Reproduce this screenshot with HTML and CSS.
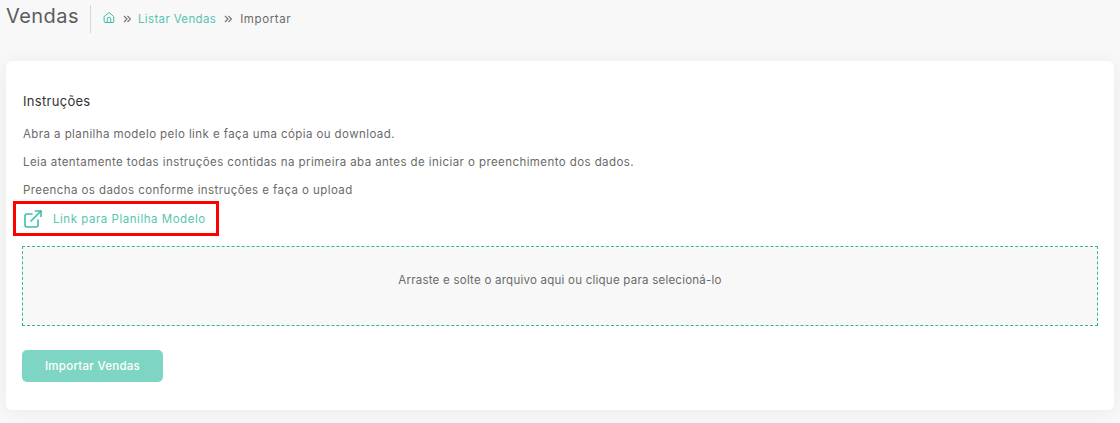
FILE: index.html
```html
<!DOCTYPE html>
<html lang="pt">
<head>
<meta charset="utf-8">
<title>Importar Vendas</title>
<link rel="stylesheet" href="styles.css">
</head>
<body>
<header class="page-head">
  <h1 class="page-title">Vendas</h1>
  <nav class="crumbs">
    <svg class="home-icon" viewBox="0 0 24 24" width="12" height="13" fill="none" stroke="currentColor" stroke-width="2" stroke-linecap="round" stroke-linejoin="round"><path d="M2.500 10 12 2l9.500 8v10.500a1.500 1.500 0 0 1-1.500 1.500H4a1.500 1.500 0 0 1-1.500-1.500z"/><path d="M8.500 22v-7a3.500 3.500 0 0 1 7 0v7"/></svg>
    <svg class="sep" viewBox="0 0 8 8" width="8" height="8" fill="none" stroke="currentColor" stroke-width="1.200"><path d="M1 1l3 3-3 3M4.500 1l3 3-3 3"/></svg>
    <a class="crumb-link" href="#">Listar Vendas</a>
    <svg class="sep" viewBox="0 0 8 8" width="8" height="8" fill="none" stroke="currentColor" stroke-width="1.200"><path d="M1 1l3 3-3 3M4.500 1l3 3-3 3"/></svg>
    <span class="crumb-current">Importar</span>
  </nav>
</header>
<main class="card">
  <h2 class="card-title">Instruções</h2>
  <p class="line">Abra a planilha modelo pelo link e faça uma cópia ou download.</p>
  <p class="line">Leia atentamente todas instruções contidas na primeira aba antes de iniciar o preenchimento dos dados.</p>
  <p class="line">Preencha os dados conforme instruções e faça o upload</p>
  <a class="sheet-link" href="#">
    <svg class="link-icon" viewBox="0 0 18 18" width="18" height="18" fill="none" stroke="currentColor" stroke-width="1.600" stroke-linecap="round" stroke-linejoin="round"><path d="M14 10v5a2 2 0 0 1-2 2H3a2 2 0 0 1-2-2V6a2 2 0 0 1 2-2h5"/><path d="M11.500 1H17v5.500"/><path d="M7 11 17 1"/></svg>
    <span>Link para Planilha Modelo</span>
  </a>
  <div class="dropzone">Arraste e solte o arquivo aqui ou clique para selecioná-lo</div>
  <button class="submit" type="button">Importar Vendas</button>
</main>
</body>
</html>
```
FILE: styles.css
```css
* { box-sizing: border-box; }
html, body { margin: 0; height: 100%; }
body {
  background: #f8f8f8;
  font-family: "Inter", "Liberation Sans", sans-serif;
  padding: 0 6px;
  height: 423px;
  overflow: hidden;
  color: #555;
}
.page-head {
  display: flex;
  align-items: flex-start;
  height: 61px;
  padding-top: 5px;
}
.page-title {
  margin: 0;
  font-size: 20px;
  line-height: 23px;
  font-weight: 400;
  color: #5c5c5c;
  letter-spacing: 0.45px;
  width: 85px;
  height: 28px;
  border-right: 1px solid #d6d6dc;
}
.crumbs {
  display: flex;
  align-items: center;
  height: 28px;
  margin-left: 12px;
  font-size: 11.500px;
  letter-spacing: 0.35px;
}
.home-icon { color: #3dbfa5; margin-top: -3px; }
.sep { color: #777; margin: -1px 7px 0 8px; }
.crumb-link { color: #56c6af; text-decoration: none; }
.crumb-current { color: #6a6a6a; letter-spacing: 0.6px; margin-left: 1px; }
.card {
  display: flex;
  flex-direction: column;
  align-items: flex-start;
  height: 349px;
  padding: 31px 16px 0;
  background: #fff;
  border-radius: 6px;
  box-shadow: 0 2px 20px rgba(0, 0, 0, 0.06);
}
.card-title {
  margin: 0 0 16px 1px;
  font-size: 13px;
  line-height: 18px;
  font-weight: 400;
  color: #333;
  letter-spacing: 0.3px;
}
.line {
  margin: 0 0 12px 1px;
  font-size: 11.500px;
  line-height: 16px;
  color: #6a6a6a;
  letter-spacing: 0.42px;
}
.sheet-link {
  display: flex;
  align-items: center;
  gap: 11px;
  width: 206px;
  height: 35px;
  margin: -9px 0 10px -9px;
  padding-left: 8px;
  border: 3px solid #f00;
  color: #56c6af;
  font-size: 11.500px;
  letter-spacing: 0.53px;
  text-decoration: none;
}
.link-icon { color: #3dbfa5; flex: none; }
.dropzone {
  display: flex;
  align-items: center;
  justify-content: center;
  width: 1076px;
  height: 80px;
  padding-bottom: 13px;
  border: 1px dashed #2fb99d;
  background: #f8f8f8;
  font-size: 11.500px;
  letter-spacing: 0.24px;
  color: #6a6a6a;
}
.submit {
  width: 141px;
  height: 32px;
  margin-top: 24px;
  border: 0;
  border-radius: 5px;
  background: #7fd5c3;
  color: #fff;
  font: 500 11.500px "Inter", "Liberation Sans", sans-serif;
  letter-spacing: 0.27px;
}
```
